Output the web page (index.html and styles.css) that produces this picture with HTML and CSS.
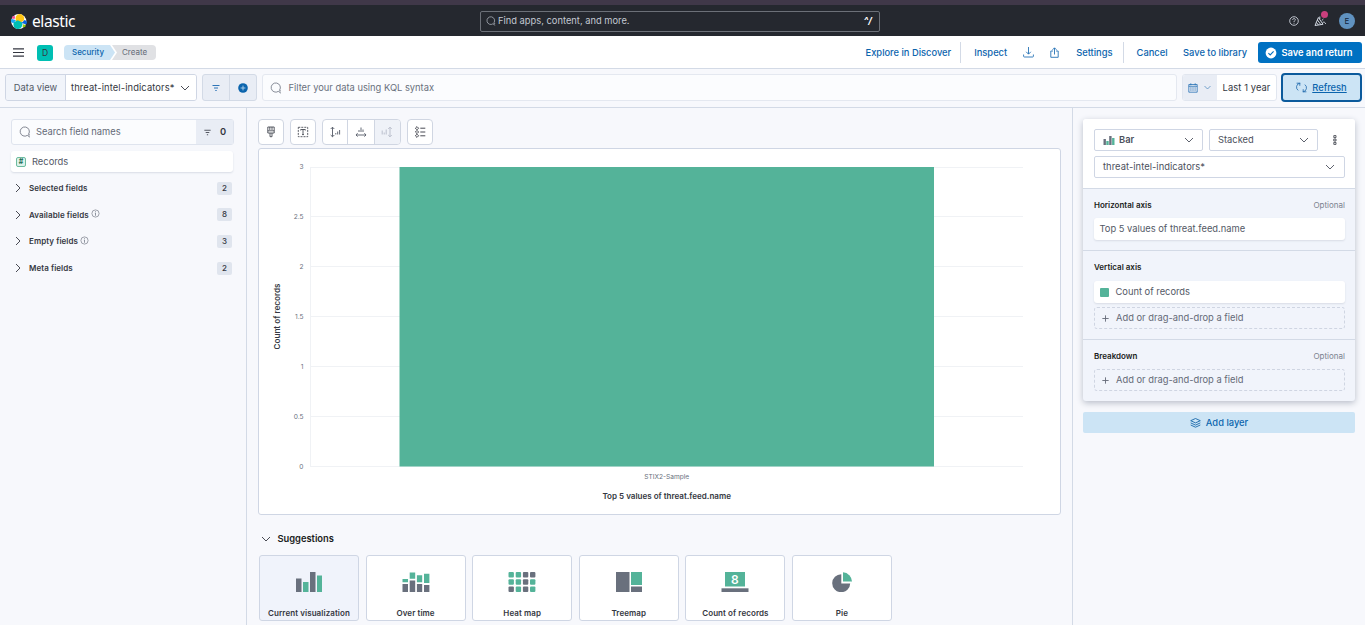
FILE: index.html
```html
<!DOCTYPE html>
<html lang="en">
<head>
<meta charset="utf-8">
<title>Lens - Elastic</title>
<link rel="stylesheet" href="styles.css">
</head>
<body>
<svg class="defs" width="0" height="0">
  <symbol id="down" viewBox="0 0 12 12"><path d="M2 4l4 4 4-4" fill="none" stroke="currentColor" stroke-width=".9"/></symbol>
  <symbol id="right" viewBox="0 0 12 12"><path d="M4 2l4 4-4 4" fill="none" stroke="currentColor" stroke-width=".9"/></symbol>
  <symbol id="search" viewBox="0 0 12 12"><path d="M8.3 9.4A4.6 4.6 0 1 1 9.6 8.1M8.3 9.4l2.7 1.8M9 8.8l2 .1" fill="none" stroke="currentColor" stroke-width=".8"/></symbol>
  <symbol id="filter" viewBox="0 0 10 10"><path d="M1.5 2.5h7M3 5h4M4.3 7.5h1.4" fill="none" stroke="currentColor" stroke-width=".9"/></symbol>
  <symbol id="info" viewBox="0 0 10 10"><circle cx="5" cy="5" r="4" fill="none" stroke="currentColor" stroke-width=".7"/><path d="M5 2.5v1M4.3 4.5H5v3" fill="none" stroke="currentColor" stroke-width=".8"/></symbol>
  <symbol id="plus" viewBox="0 0 10 10"><path d="M5 1.5v7M1.5 5h7" fill="none" stroke="currentColor"/></symbol>
</svg>
<div class="strip"></div>
<header class="top">
  <div class="brand">
    <svg width="17" height="17" viewBox="0 0 17 17"><circle cx="8.8" cy="8.5" r="7.6" fill="#fff"/><g transform="translate(.5)"><path d="M5 5.2C5.5 2 8 .7 10.2 1.2c3.2.7 4.2 3.9 3.1 6.4L9.6 9.9 5.6 8z" fill="#fec514"/><path d="M12 11.4c-.5 3.6-3.2 5-5.4 4.5-3.4-.8-4.4-4.1-3.2-6.7L7.2 7.3l4.2 2z" fill="#00bfb3"/><path d="M1.9 3.6c1-1 2.3-.8 2.8-.2L4.1 6 1.5 5.4c-.2-.7 0-1.3.4-1.8z" fill="#f04e98"/><path d="M1.4 6.1l2.8.7 1.3.7L2.8 10.2C0 9.4-.2 7.2 1.4 6.1z" fill="#1ba9f5"/><path d="M14 7c2.9.9 3.1 3.2 1.4 4.3l-2.8-.7-1.5-.7z" fill="#0b64dd"/><path d="M12.6 11.3l2.6.7c.1 1.9-1.5 2.8-3.1 1.9z" fill="#93c90e"/></g></svg>
    <span class="brand-name">elastic</span>
  </div>
  <div class="global-search">
    <svg class="i10"><use href="#search"/></svg><span class="grow">Find apps, content, and more.</span><b>^/</b>
  </div>
  <div class="top-tools">
    <svg width="10" height="10" viewBox="0 0 10 10" fill="none" stroke="#dfe5ef" stroke-width=".8"><circle cx="5" cy="5" r="4.3"/><path d="M3.7 4c0-2 2.7-1.9 2.6-.1C6.2 4.8 5 4.7 5 6M5 6.8v.9"/></svg>
    <span class="news"><svg width="13" height="12" viewBox="0 0 13 12" fill="none" stroke="#dfe5ef" stroke-width=".9"><path d="M4.4 2.5L1 10.5l8-1.2zM3.4 5l3.4 4.5M2.4 7.5l2 2.4M5.8 4V1.5M7.7 5.7L9.4 4M8.7 7.4c1.4-.7 2.4 0 3 1.5"/></svg><i></i></span>
    <span class="avatar">E</span>
  </div>
</header>
<nav class="nav">
  <svg class="menu" width="11" height="9" viewBox="0 0 11 9"><path d="M0 .9h11M0 4.5h11M0 8.1h11" stroke="#343741" stroke-width="1.1"/></svg>
  <span class="space">D</span>
  <div class="crumbs"><span class="crumb first">Security</span><span class="crumb last">Create</span></div>
  <div class="actions">
    <a>Explore in Discover</a><span class="rule"></span><a class="inspect">Inspect</a>
    <svg class="dl" width="11" height="11" viewBox="0 0 11 11" fill="none" stroke="#2673b5" stroke-width=".9"><path d="M5.5 0v7M3.2 4.8l2.3 2.4 2.3-2.4M.6 7.5v1.7q0 .8.8.8h8.2q.8 0 .8-.8V7.5"/></svg>
    <svg class="share" width="9" height="11" viewBox="0 0 9 11" fill="none" stroke="#2673b5" stroke-width=".9"><path d="M3 4H.8v6.3h7.4V4H6M4.5 7.5V1M2.5 2.8L4.5.8l2 2"/></svg>
    <a class="settings">Settings</a><span class="rule r2"></span><a class="cancel">Cancel</a><a class="save">Save to library</a>
    <button class="primary"><svg width="12" height="12" viewBox="0 0 12 12"><circle cx="6" cy="6" r="5.4" fill="#fff"/><path d="M3.4 6.1l1.8 1.8 3.4-3.6" fill="none" stroke="#0071c2" stroke-width="1.1"/></svg><span>Save and return</span></button>
  </div>
</nav>
<section class="query">
  <div class="dataview"><span class="prepend">Data view</span><span class="dv-name"><span class="tx">threat-intel-indicators*</span><svg class="i12"><use href="#down"/></svg></span></div>
  <div class="filters"><span><svg class="i10"><use href="#filter"/></svg></span><span><svg width="10" height="10" viewBox="0 0 10 10"><circle cx="5" cy="5" r="4.8" fill="#0b64ad"/><path d="M5 2.6v4.8M2.6 5h4.8" stroke="#c7dff2" stroke-width=".8"/></svg></span></div>
  <div class="kql"><svg class="i12"><use href="#search"/></svg><span class="tx">Filter your data using KQL syntax</span></div>
  <div class="dates"><span class="cal"><svg width="10" height="10" viewBox="0 0 10 10" fill="none" stroke="#2872b5" stroke-width=".8"><path d="M.8 1.5h8.4v7.7H.8zM.8 3.3h8.4M2.8.3v2M7.2.3v2"/><path d="M2.3 5h5.6M2.3 7h5.6" stroke-dasharray="1.2 .9" stroke-width="1.1"/></svg><svg class="i9"><use href="#down"/></svg></span><span class="range">Last 1 year</span></div>
  <button class="refresh"><svg width="11" height="11" viewBox="0 0 11 11" fill="none" stroke="#1a66ab"><path d="M4.3 1.2H3.8A4 4 0 0 0 2.2 8.4M.6 1.2h3.2v2.6M6.7 9.8h.5A4 4 0 0 0 8.8 2.6M10.4 9.8H7.2V7.2" stroke-width=".8"/></svg><u>Refresh</u></button>
</section>
<main class="workspace">
  <aside class="fields">
    <div class="field-search"><svg class="i12"><use href="#search"/></svg><span class="grow">Search field names</span><span class="count"><svg class="i9"><use href="#filter"/></svg><b>0</b></span></div>
    <div class="record"><span class="token">#</span><span>Records</span></div>
    <div class="group"><svg class="i12"><use href="#right"/></svg><b>Selected fields</b><span class="badge">2</span></div>
    <div class="group"><svg class="i12"><use href="#right"/></svg><b>Available fields</b><svg class="info"><use href="#info"/></svg><span class="badge">8</span></div>
    <div class="group"><svg class="i12"><use href="#right"/></svg><b>Empty fields</b><svg class="info"><use href="#info"/></svg><span class="badge">3</span></div>
    <div class="group"><svg class="i12"><use href="#right"/></svg><b>Meta fields</b><span class="badge">2</span></div>
  </aside>
  <section class="center">
    <div class="toolbar">
      <span class="tool"><svg width="12" height="12" viewBox="0 0 12 12" fill="none" stroke="#343741" stroke-width=".8"><path d="M2.8 1h6.4v6H2.8zM2.8 4.8h6.4M4.8 1v3M7 1v3M5 7v3.7h2V7"/></svg></span>
      <span class="tool"><svg width="12" height="12" viewBox="0 0 12 12" fill="none" stroke="#343741" stroke-width=".8"><path d="M1.3 1.3h9.4v9.4H1.3z" stroke-dasharray="2 1"/><path d="M3.7 4.5v-1h4.6v1M6 3.5v5M5 8.6h2"/></svg></span>
      <div class="tool-group">
        <span class="left-axis"><svg width="12" height="12" viewBox="0 0 12 12" fill="none" stroke="#535966" stroke-width=".9"><path d="M3.5 1.3v9.4M1.7 3l1.8-1.8L5.3 3M1.7 9l1.8 1.8L5.3 9M6.8 8.5V7M8.7 8.5V5.5M10.6 8.5V4"/></svg></span>
        <span><svg width="12" height="12" viewBox="0 0 12 12" fill="none" stroke="#535966" stroke-width=".9"><path d="M1.3 9h9.4M2.6 7.2L1 9l1.6 1.6M9.4 7.2L11 9l-1.6 1.6M4 6V4M6 6V1.5M8 6V3.5"/></svg></span>
        <span class="off"><svg width="12" height="12" viewBox="0 0 12 12" fill="none" stroke="#b5bac8" stroke-width=".9"><path d="M9 1.3v9.4M7.2 3L9 1.2 10.8 3M7.2 9L9 10.8 10.8 9M1.2 8.5V4.5M3.2 8.5v-2M5.2 8.5V3.5"/></svg></span>
      </div>
      <span class="tool"><svg width="12" height="12" viewBox="0 0 12 12" fill="none" stroke="#343741" stroke-width=".9"><path d="M6.3 2.2h5M6.3 6h5M6.3 9.8h5"/><path d="M3 .6l1.6 1.6L3 3.8 1.4 2.2zM3 4.4L4.6 6 3 7.6 1.4 6zM3 8.2l1.6 1.6L3 11.4 1.4 9.8z"/></svg></span>
    </div>
    <div class="chart">
      <svg width="801" height="364" viewBox="259 149 801 364">
        <g stroke="#f0f2f5" stroke-width="1"><path d="M310.5 167V467M311 167.5H1023M311 216.5H1023M311 266.5H1023M311 316.5H1023M311 366.5H1023M311 416.5H1023M311 466.5H1023"/></g>
        <rect x="399.5" y="167" width="534.5" height="299.5" fill="#54b399"/>
        <g class="ticks"><text x="303.5" y="169.3">3</text><text x="303.5" y="219.2">2.5</text><text x="303.5" y="269.2">2</text><text x="303.5" y="318.6">1.5</text><text x="303.5" y="369">1</text><text x="303.5" y="419">0.5</text><text x="303.5" y="469.2">0</text></g>
        <text class="cat" x="666.7" y="479" textLength="45" lengthAdjust="spacingAndGlyphs">STIX2-Sample</text>
        <text class="axis" x="666.7" y="499" textLength="128.5" lengthAdjust="spacingAndGlyphs">Top 5 values of threat.feed.name</text>
        <text class="axis" transform="translate(280 316.5) rotate(-90)" textLength="66" lengthAdjust="spacingAndGlyphs">Count of records</text>
      </svg>
    </div>
    <div class="sugg-head"><svg class="i12"><use href="#down"/></svg><b>Suggestions</b></div>
    <div class="cards">
      <div class="card on"><svg width="28" height="20" viewBox="0 0 28 20"><path d="M1 6.5h5.5V20H1zM15 0h5.5v20H15z" fill="#69707d"/><path d="M8 10h5.5v10H8zM22 3.5h5V20h-5z" fill="#54b399"/></svg><b>Current visualization</b></div>
      <div class="card"><svg width="28" height="20" viewBox="0 0 28 20"><path d="M.5 12H6v8H.5zM7.7 8.5h5.5V20H7.7zM14.9 12h5.3v8h-5.3zM22 13h5.4v7H22z" fill="#69707d"/><path d="M.5 7H6v3.3H.5zM7.7.5h5.5v6.3H7.7zM14.9 3.3h5.3v7h-5.3zM22 1.7h5.4v9.2H22z" fill="#54b399"/></svg><b>Over time</b></div>
      <div class="card"><svg width="28" height="20" viewBox="0 0 28 20"><g fill="#54b399"><rect x=".5" width="5.4" height="5.4" rx="1"/><rect x="7.7" width="5.4" height="5.4" rx="1"/><rect x=".5" y="7.3" width="5.4" height="5.4" rx="1"/><rect x="7.7" y="7.3" width="5.4" height="5.4" rx="1"/><rect x="22" y="7.3" width="5.4" height="5.4" rx="1"/><rect x="7.7" y="14.6" width="5.4" height="5.4" rx="1"/><rect x="22" y="14.6" width="5.4" height="5.4" rx="1"/></g><g fill="#69707d"><rect x="14.9" width="5.4" height="5.4" rx="1"/><rect x="22" width="5.4" height="5.4" rx="1"/><rect x="14.9" y="7.3" width="5.4" height="5.4" rx="1"/><rect x=".5" y="14.6" width="5.4" height="5.4" rx="1"/><rect x="14.9" y="14.6" width="5.4" height="5.4" rx="1"/></g></svg><b>Heat map</b></div>
      <div class="card"><svg width="28" height="20" viewBox="0 0 28 20"><path d="M1 0h13.5v20H1zM16 14.5h11V20H16z" fill="#69707d"/><path d="M16 0h11v13H16z" fill="#54b399"/></svg><b>Treemap</b></div>
      <div class="card"><svg width="28" height="20" viewBox="0 0 28 20"><path d="M4 0h20v14.5H4z" fill="#54b399"/><path d="M.5 16.3h27V20H.5z" fill="#69707d"/><text class="metric" x="14" y="11.6">8</text></svg><b>Count of records</b></div>
      <div class="card"><svg width="28" height="20" viewBox="0 0 28 20"><path d="M13.3 2.2v9.2h8.9A9 9 0 1 1 13.3 2.2z" fill="#69707d"/><path d="M15 .3a9.5 9.5 0 0 1 9 9.2h-9z" fill="#54b399"/></svg><b>Pie</b></div>
    </div>
  </section>
  <aside class="config">
    <div class="layer">
      <div class="layer-head">
        <div class="row"><span class="select bar"><svg width="12" height="9" viewBox="0 0 12 9"><path d="M.5 3h2.4v6H.5zM6.2 0h2.4v9H6.2z" fill="#69707d"/><path d="M3.3 5h2.4v4H3.3zM9.1 2h2.4v7H9.1z" fill="#54b399"/></svg><b class="grow">Bar</b><svg class="i12"><use href="#down"/></svg></span><span class="select stacked"><span class="grow">Stacked</span><svg class="i12"><use href="#down"/></svg></span><svg class="dots" width="4" height="10" viewBox="0 0 4 10" fill="none" stroke="#343741" stroke-width=".8"><path d="M.8.6h2.2v2H.8zM.8 4h2.2v2H.8zM.8 7.4h2.2v2H.8z"/></svg></div>
        <div class="select source"><span class="grow">threat-intel-indicators*</span><svg class="i12"><use href="#down"/></svg></div>
      </div>
      <div class="dim"><div class="dim-head"><b>Horizontal axis</b><span>Optional</span></div><div class="pill">Top 5 values of threat.feed.name</div></div>
      <div class="dim vertical"><div class="dim-head"><b>Vertical axis</b></div><div class="pill"><i class="swatch"></i>Count of records</div><div class="drop"><svg class="i9"><use href="#plus"/></svg>Add or drag-and-drop a field</div></div>
      <div class="dim"><div class="dim-head"><b>Breakdown</b><span>Optional</span></div><div class="drop"><svg class="i9"><use href="#plus"/></svg>Add or drag-and-drop a field</div></div>
    </div>
    <button class="add"><svg width="11" height="10" viewBox="0 0 11 10" fill="none" stroke="#1968a9" stroke-width=".9"><path d="M5.5.5l4.8 2.2-4.8 2.2L.7 2.7zM.7 4.9l4.8 2.2 4.8-2.2M.7 7l4.8 2.2L10.3 7"/></svg><span>Add layer</span></button>
  </aside>
</main>
</body>
</html>
```
FILE: styles.css
```css
* { box-sizing: border-box; }
body { margin: 0; width: 1365px; height: 625px; overflow: hidden; font: 9.33px/14px Inter, sans-serif; color: #343741; background: #f7f8fc; }
button { font: inherit; border: 0; padding: 0; }
svg { flex: none; display: block; }
b { font-weight: 600; }
.defs { display: none; }
.grow { flex: 1; }
.i9 { width: 9px; height: 9px; }
.i10 { width: 10px; height: 10px; }
.i12 { width: 12px; height: 12px; }

.strip { height: 5px; background: #403849; }
.top { height: 31px; background: #25282f; display: flex; align-items: center; color: #dfe5ef; padding-top: 1px; }
.brand { width: 480px; padding-left: 10px; display: flex; align-items: center; gap: 5px; }
.brand-name { font: 15.5px/20px "Noto Sans", sans-serif; color: #fff; letter-spacing: -.4px; }
.global-search { width: 400px; height: 21px; border: 1px solid #6c7078; border-radius: 2px; display: flex; align-items: center; gap: 2px; padding: 0 7px 0 5px; color: #c3c8d2; }
.global-search b { color: #fff; font-style: italic; font-weight: 700; }
.top-tools { margin-left: auto; display: flex; align-items: center; gap: 14px; padding-right: 10px; }
.news { position: relative; margin-left: 1px; }
.news i { position: absolute; width: 7px; height: 7px; border-radius: 50%; background: #ca3f7d; top: -4px; right: -1px; }
.avatar { width: 16px; height: 16px; border-radius: 50%; background: #6092c0; color: #10233a; text-align: center; line-height: 16px; font-size: 8px; margin-left: -2px; }

.nav { height: 33px; background: #fff; border-bottom: 1px solid #d3dae6; display: flex; align-items: center; padding: 1px 3px 0 13px; }
.space { width: 16px; height: 16px; border-radius: 3px; background: #00bfb3; text-align: center; line-height: 16px; font-size: 8.5px; margin-left: 13px; }
.crumbs { display: flex; margin-left: 11px; font-size: 8px; line-height: 15px; }
.crumb { height: 15px; }
.first { width: 51px; padding-left: 8px; background: #cce4f5; color: #0b64ad; font-weight: 500; clip-path: polygon(0 0, 46px 0, 100% 50%, 46px 100%, 0 100%); border-radius: 4px 0 0 4px; }
.last { width: 44px; padding-left: 10px; margin-left: -3px; background: #e0e1e4; color: #646a77; clip-path: polygon(0 0, 100% 0, 100% 100%, 0 100%, 5px 50%); border-radius: 0 4px 4px 0; }
.actions { margin-left: auto; display: flex; align-items: center; color: #0b64ad; font-weight: 500; }
.actions a { padding-top: 1px; }
.rule { width: 1px; height: 21px; background: #d3dae6; margin: 0 13px 0 9px; }
.r2 { margin-left: 10px; }
.dl { margin-left: 16px; }
.share { margin-left: 16px; }
.settings { margin-left: 17px; }
.save { margin-left: 15.5px; }
.primary { width: 104px; height: 21px; margin-left: 11px; border-radius: 3px; background: #0071c2; color: #fff; font-weight: 600; display: flex; align-items: center; justify-content: center; gap: 4px; padding-right: 2px; }

.query { height: 39px; border-bottom: 1px solid #d3dae6; display: flex; align-items: center; padding: 0 3px 1px 5px; }
.dataview { width: 192px; height: 27px; border: 1px solid #cfd6e4; border-radius: 3px; display: flex; align-items: center; overflow: hidden; line-height: 25px; }
.prepend { width: 59px; text-align: center; background: #f1f4fa; color: #535966; }
.dv-name { flex: 1; background: #fff; border-left: 1px solid #cfd6e4; display: flex; align-items: center; justify-content: space-between; padding: 0 5px; letter-spacing: .12px; }
.filters { width: 55px; height: 27px; margin-left: 5px; border: 1px solid #d3dae6; border-radius: 3px; background: #e9edf5; display: flex; color: #1968b0; }
.filters span { flex: 1; display: flex; align-items: center; justify-content: center; }
.filters span + span { border-left: 1px solid #d3dae6; }
.kql { width: 915px; height: 27px; margin-left: 5px; background: #fbfcfe; border: 1px solid #e4e8f0; border-radius: 3px; display: flex; align-items: center; gap: 7px; padding-left: 6.5px; color: #69707d; }
.dates { width: 95px; height: 27px; margin-left: 5px; border: 1px solid #e1e6ef; border-radius: 3px; background: #fff; display: flex; line-height: 25px; overflow: hidden; }
.cal { width: 34px; background: #e9edf5; display: flex; align-items: center; justify-content: center; gap: 5px; color: #3c7db8; }
.range { flex: 1; text-align: center; letter-spacing: .1px; }
.refresh { width: 81px; height: 29px; margin-left: 4px; border: 2px solid #0b5a9c; border-radius: 4px; background: #cce4f5; color: #0b64ad; font-weight: 500; display: flex; align-items: center; justify-content: center; gap: 5px; }

.workspace { height: 517px; display: flex; }
.fields { width: 247px; padding: 11px 12px 0 11px; border-right: 1px solid #d3dae6; }
.field-search { height: 26px; border: 1px solid #dfe4ee; border-radius: 3px; background: #fbfcfe; display: flex; align-items: center; gap: 5px; padding-left: 7px; color: #646a77; }
.count { width: 37px; height: 24px; background: #e9edf5; color: #343741; display: flex; align-items: center; justify-content: center; gap: 8px; }
.record { height: 21px; margin: 6px 1px 0 0; border-radius: 3px; background: #fff; box-shadow: 0 1px 2px #d8dce5; display: flex; align-items: center; gap: 6px; padding-left: 5px; color: #535966; }
.token { width: 10px; height: 10px; border: 1px solid #6dbb9f; background: #dcf2ea; border-radius: 2px; color: #216b52; font: 700 7px/8px Inter, sans-serif; text-align: center; }
.record + .group { margin-top: 3px; }
.group { height: 26.6px; display: flex; align-items: center; padding: 0 2px 0 1px; font-size: 8px; letter-spacing: .07px; }
.group b { margin-left: 5px; }
.info { width: 9px; height: 9px; margin: 0 0 2px 2px; color: #69707d; }
.badge { width: 15px; height: 13px; margin-left: auto; border-radius: 2px; background: #e0e5ee; text-align: center; line-height: 13px; font-weight: 500; }

.center { width: 825px; padding: 11px 0 0 11px; }
.toolbar { display: flex; gap: 7px; }
.tool, .tool-group { height: 26px; border: 1px solid #d0d6e2; border-radius: 4px; background: #fff; display: flex; overflow: hidden; }
.tool { width: 26px; align-items: center; justify-content: center; margin-right: -1px; }
.tool-group { width: 79px; }
.tool-group span { flex: 1; display: flex; align-items: center; justify-content: center; }
.tool-group .left-axis { flex: 0 0 24px; }
.tool-group span + span { border-left: 1px solid #d0d6e2; }
.tool-group .off { background: #eff2f8; }
.tool-group + .tool { margin-left: -1px; }
.chart { width: 803px; height: 367px; margin-top: 3px; border: 1px solid #cfd6e4; border-radius: 3px; background: #fff; }
.ticks, .cat { font-size: 6.6px; fill: #69707d; }
.ticks { text-anchor: end; }
.cat, .axis { text-anchor: middle; }
.axis { font-size: 8px; font-weight: 600; fill: #343741; }
.sugg-head { display: flex; align-items: center; gap: 6px; margin: 17px 0 9px 1.5px; color: #1a1c21; }
.sugg-head svg { color: #343741; }
.cards { display: flex; gap: 6.6px; padding-left: 1px; }
.card { width: 100px; height: 66px; border: 1px solid #cfd6e4; border-radius: 3px; background: #fff; display: flex; flex-direction: column; align-items: center; padding-top: 16px; font-size: 8px; letter-spacing: .08px; }
.card b { margin-top: 14px; white-space: nowrap; }
.on { background: #f0f3fb; }
.metric { font-size: 12px; font-weight: 600; text-anchor: middle; fill: #fff; }

.config { width: 293px; padding: 11px 10px 0; border-left: 1px solid #d3dae6; }
.layer { height: 282px; border-radius: 3px; background: #f1f4fb; box-shadow: 0 2px 6px #b8bdc9; overflow: hidden; }
.layer-head { height: 69px; background: #fff; padding: 10px 10px 0 11px; }
.row { display: flex; align-items: center; margin-bottom: 5px; }
.select { height: 22px; border: 1px solid #cfd6e4; border-radius: 2px; background: #fff; display: flex; align-items: center; padding: 0 8px; color: #4b505c; }
.source { letter-spacing: .06px; }
.bar, .stacked { width: 109px; padding-right: 7px; }
.bar { margin-right: 6px; gap: 4px; }
.dots { margin-left: 15px; }
.dim { border-top: 1px solid #d3dae6; padding: 9px 10px 10px 11px; }
.dim-head { height: 14px; display: flex; justify-content: space-between; margin-bottom: 6px; font-size: 8px; color: #1a1c21; }
.vertical .dim-head { margin-bottom: 7px; }
.dim-head span { color: #7c828f; }
.pill { height: 22px; border-radius: 3px; background: #fff; box-shadow: 0 1px 2px #d8dce5; padding-left: 5.5px; display: flex; align-items: center; color: #535966; }
.swatch { width: 9px; height: 9px; background: #54b399; border-radius: 1px; margin-right: 7px; }
.drop { height: 22px; border: 1px dashed #cfd5e2; border-radius: 3px; display: flex; align-items: center; gap: 6px; padding-left: 6px; color: #646a77; }
.pill + .drop { margin-top: 4px; }
.add { width: 272px; height: 21px; margin-top: 11px; border-radius: 2px; background: #cce4f5; color: #0b64ad; font-weight: 500; display: flex; align-items: center; justify-content: center; gap: 5px; }
```
